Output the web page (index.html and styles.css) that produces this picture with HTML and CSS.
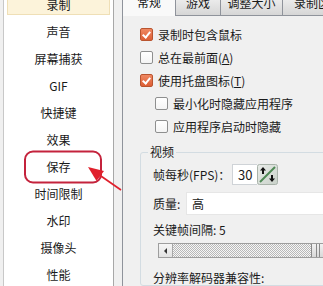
FILE: index.html
```html
<!DOCTYPE html>
<html>
<head>
<meta charset="utf-8">
<link rel="stylesheet" href="styles.css">
</head>
<body>
<div class="app">
  <div class="sidebar">
    <ul class="menu">
      <li class="item sel">录制</li>
      <li class="item">声音</li>
      <li class="item">屏幕捕获</li>
      <li class="item">GIF</li>
      <li class="item">快捷键</li>
      <li class="item">效果</li>
      <li class="item">保存</li>
      <li class="item">时间限制</li>
      <li class="item">水印</li>
      <li class="item">摄像头</li>
      <li class="item">性能</li>
    </ul>
  </div>
  <div class="tabctl">
    <div class="tabs">
      <div class="tab active">常规</div>
      <div class="tab">游戏</div>
      <div class="tab">调整大小</div>
      <div class="tab">录制区</div>
    </div>
    <div class="panel">
      <div class="row"><span class="cb checked"></span><span>录制时包含鼠标</span></div>
      <div class="row"><span class="cb"></span><span>总在最前面(<u>A</u>)</span></div>
      <div class="row"><span class="cb checked"></span><span>使用托盘图标(<u>T</u>)</span></div>
      <div class="row sub"><span class="cb"></span><span>最小化时隐藏应用程序</span></div>
      <div class="row sub"><span class="cb"></span><span>应用程序启动时隐藏</span></div>
      <fieldset class="group">
        <legend>视频</legend>
        <div class="frow">
          <span class="flabel">帧每秒(FPS)：</span>
          <div class="spin">
            <span class="spinval">30</span>
            <svg class="spinbtn" width="21" height="21" viewBox="0 0 21 21">
              <defs>
                <linearGradient id="sg" x1="0" y1="0" x2="1" y2="1">
                  <stop offset="0" stop-color="#e9ece9"/>
                  <stop offset="1" stop-color="#c9d1c9"/>
                </linearGradient>
              </defs>
              <rect x="0.5" y="0.5" width="20" height="20" rx="2" fill="url(#sg)" stroke="#a9b3aa"/>
              <line x1="3" y1="18" x2="18" y2="3" stroke="#4f8a55" stroke-width="2"/>
              <path d="M6 3 L9 6.5 L7 6.5 L7 10 L5 10 L5 6.5 L3 6.5 Z" fill="#111"/>
              <path d="M15 18 L12 14.5 L14 14.5 L14 11 L16 11 L16 14.5 L18 14.5 Z" fill="#111"/>
            </svg>
          </div>
        </div>
        <div class="frow q">
          <span class="qlabel">质量:</span>
          <div class="select">高</div>
        </div>
        <div class="lbl">关键帧间隔: 5</div>
        <div class="slider">
          <span class="sbtn"><span class="larrow"></span></span>
          <span class="track"></span>
          <span class="thumb"></span>
        </div>
        <div class="lbl last">分辨率解码器兼容性:</div>
      </fieldset>
    </div>
  </div>
</div>
<svg class="annot" width="323" height="286" viewBox="0 0 323 286">
  <rect x="25" y="151.5" width="76" height="31" rx="8" ry="8" fill="none" stroke="#c4233c" stroke-width="2"/>
  <line x1="98" y1="174" x2="121" y2="190" stroke="#e0202c" stroke-width="1.6"/>
  <path d="M88 167 L104 171 L96.5 181 Z" fill="#e0202c"/>
</svg>
</body>
</html>
```

FILE: styles.css
```css
html, body {
  margin: 0;
  padding: 0;
}
body {
  width: 323px;
  height: 286px;
  overflow: hidden;
  position: relative;
  background: #f0f0f0;
  font-family: "Noto Sans CJK SC", "Noto Sans", sans-serif;
  font-size: 12px;
  color: #1a1a1a;
}
.app {
  display: flex;
  height: 286px;
  overflow: hidden;
}
.sidebar {
  margin-left: 3px;
  width: 109px;
  flex: none;
  height: 286px;
  background: #fff;
  border-left: 1px solid #c8c8c8;
  border-right: 1px solid #a8a8a8;
  overflow: hidden;
}
.menu {
  list-style: none;
  margin: -9px 0 0 0;
  padding: 0;
}
.item {
  height: 27px;
  line-height: 27px;
  text-align: center;
}
.item.sel {
  height: 19px;
  line-height: 19px;
  margin: 3px 3px;
  background: #fcf3da;
  border: 1px solid #efdfb6;
}
.tabctl {
  flex: none;
  width: 220px;
  margin-left: 8px;
}
.tabs {
  display: flex;
  height: 23px;
  margin-top: -8px;
  position: relative;
  z-index: 1;
}
.tab {
  height: 22px;
  margin-top: 1px;
  line-height: 18px;
  text-align: center;
  border: 1px solid #8f939b;
  border-bottom: none;
  margin-left: -1px;
  background: linear-gradient(#f3f3f3, #d6d6d6);
  box-sizing: border-box;
  flex: none;
}
.tab:nth-child(1) { width: 54px; margin-left: 0; }
.tab:nth-child(2) { width: 46px; }
.tab:nth-child(3) { width: 63px; }
.tab:nth-child(4) { width: 60px; }
.tab.active {
  height: 24px;
  margin-top: 0;
  background: #f9f9f9;
}
.panel {
  border-top: 1px solid #8f939b;
  border-left: 1px solid #8f939b;
  padding: 7px 0 0 17px;
  height: 280px;
  background: #f0f0f0;
}
.row {
  display: flex;
  align-items: center;
  gap: 5px;
  height: 23px;
  white-space: nowrap;
}
.row.sub {
  margin-left: 15px;
}
.row u {
  text-decoration: underline;
}
.cb {
  width: 13px;
  height: 13px;
  box-sizing: border-box;
  border: 1px solid #8e8f8f;
  border-radius: 2px;
  background: linear-gradient(#ffffff, #f4f4f4);
  position: relative;
  flex: none;
}
.cb.checked {
  border-color: #b9542f;
  background: linear-gradient(#ef8862, #dd5f35);
}
.cb.checked::after {
  content: "";
  position: absolute;
  left: 3px;
  top: 1px;
  width: 3px;
  height: 6px;
  border-right: 2px solid #fff;
  border-bottom: 2px solid #fff;
  transform: rotate(40deg);
}
.group {
  margin: 7px 0 0 0;
  padding: 5px 0 0 12px;
  border: 1px solid #d3dce2;
  border-radius: 3px;
  width: 240px;
  min-width: 0;
}
.group legend {
  padding: 0 2px;
  margin-left: -5px;
  line-height: 14px;
}
.frow {
  display: flex;
  align-items: center;
  height: 21px;
  white-space: nowrap;
}
.flabel {
  width: 79px;
  flex: none;
}
.spin {
  display: flex;
  height: 21px;
}
.spinval {
  width: 25px;
  box-sizing: border-box;
  height: 21px;
  line-height: 19px;
  padding-left: 5px;
  background: #fff;
  border: 1px solid #cfd3d7;
  border-right: none;
  font-size: 13px;
}
.spinbtn {
  display: block;
}
.frow.q {
  height: 23px;
  margin-top: 7px;
}
.qlabel {
  width: 33px;
  flex: none;
}
.select {
  flex: 1;
  height: 23px;
  box-sizing: border-box;
  line-height: 21px;
  padding-left: 5px;
  background: #fff;
  border: 1px solid #e6e6e6;
  border-right: none;
}
.lbl {
  margin-top: 8px;
  line-height: 14px;
  white-space: nowrap;
}
.lbl.last {
  margin-top: 13px;
}
.slider {
  display: flex;
  margin: 6px 0 0 5px;
  height: 15px;
  width: 175px;
  box-sizing: border-box;
  border: 1px solid #9e9e9e;
}
.sbtn {
  width: 13px;
  flex: none;
  background: linear-gradient(#f6f6f6, #e2e2e2);
  border-right: 1px solid #a8a8a8;
  display: flex;
  align-items: center;
  justify-content: center;
}
.larrow {
  width: 0;
  height: 0;
  border-top: 3px solid transparent;
  border-bottom: 3px solid transparent;
  border-right: 3px solid #333;
}
.track {
  flex: 1;
  background: repeating-conic-gradient(#b8b8b8 0 25%, #f6f6f6 0 50%) 0 0 / 2px 2px;
}
.thumb {
  width: 20px;
  flex: none;
  border-left: 1px solid #8a8a8a;
  background:
    linear-gradient(90deg, transparent 4px, #8a8a8a 4px, #8a8a8a 5px, transparent 5px, transparent 7px, #8a8a8a 7px, #8a8a8a 8px, transparent 8px),
    linear-gradient(#f2f2f2, #d8d8d8);
}
.annot {
  position: absolute;
  left: 0;
  top: 0;
  pointer-events: none;
}
```
